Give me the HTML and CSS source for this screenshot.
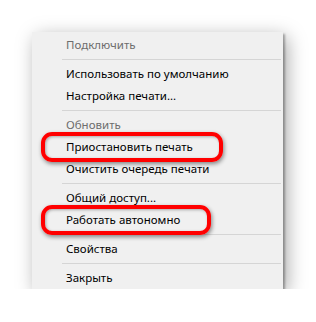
FILE: index.html
```html
<!DOCTYPE html>
<html lang="ru">
<head>
  <meta charset="UTF-8">
  <link rel="stylesheet" href="styles.css">
  <title>Меню принтера</title>
</head>
<body>

  <div class="menu">
    <div class="item disabled">Подключить</div>
    <div class="separator"></div>
    <div class="item">Использовать по умолчанию</div>
    <div class="item">Настройка печати...</div>
    <div class="separator"></div>
    <div class="item disabled">Обновить</div>
    <div class="item">Приостановить печать<span class="mark mark-wide"></span></div>
    <div class="item">Очистить очередь печати</div>
    <div class="separator"></div>
    <div class="item">Общий доступ...</div>
    <div class="item">Работать автономно<span class="mark mark-narrow"></span></div>
    <div class="separator"></div>
    <div class="item">Свойства</div>
    <div class="separator"></div>
    <div class="item">Закрыть</div>
  </div>

</body>
</html>
```

FILE: styles.css
```css
body {
  background-color: #fff;
  font-family: 'Noto Sans', 'Open Sans', sans-serif;
  margin: 0;
  padding: 32px 0 0 32px;
}

.menu {
  width: 251px;
  background-color: #f0f0f0;
  padding: 2px 0 0 0;
  box-shadow: 2px 2px 2px rgba(0, 0, 0, 0.3), 4px 5px 18px rgba(0, 0, 0, 0.35);
}

.item {
  position: relative;
  height: 22px;
  line-height: 22px;
  padding-left: 34px;
  font-size: 11.5px;
  color: #000;
  white-space: nowrap;
}

.item.disabled {
  color: #6d6d6d;
}

.separator {
  height: 1px;
  margin: 3px 2px 3px 30px;
  background-color: #d5d5d5;
}

/* красная рамка поверх пункта */
.mark {
  position: absolute;
  top: -4px;
  left: 9px;
  height: 22px;
  border: 4px solid #f00;
  border-radius: 11px;
  box-shadow: 1px 2px 4px rgba(0, 0, 0, 0.45), inset 1px 1px 3px rgba(0, 0, 0, 0.3);
}

.mark-wide {
  width: 174px;
}

.mark-narrow {
  width: 162px;
}
```
